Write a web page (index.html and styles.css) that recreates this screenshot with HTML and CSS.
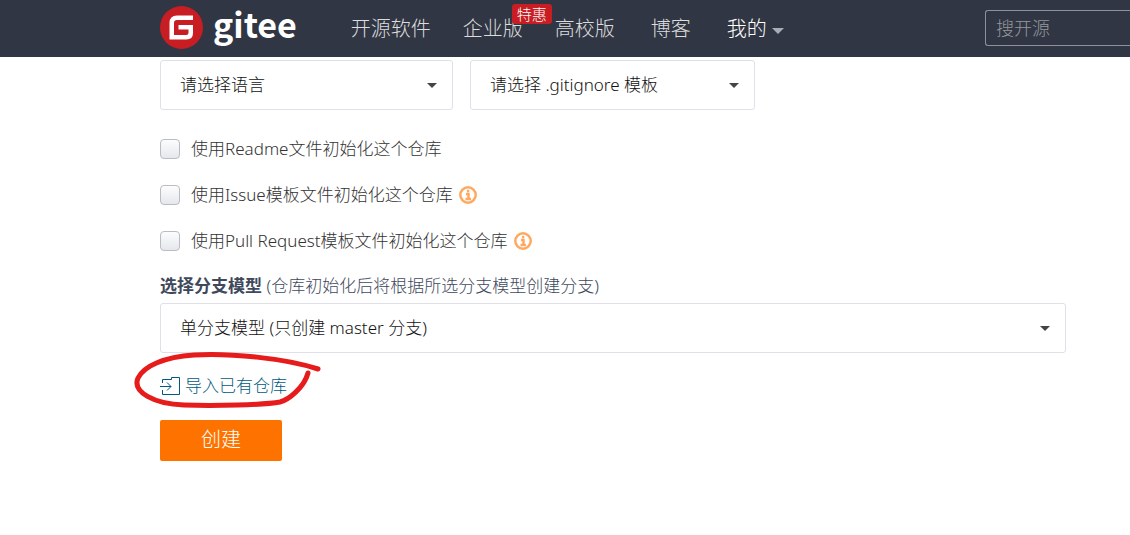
FILE: index.html
```html
<!DOCTYPE html>
<html lang="zh-CN">
  <head>
    <meta charset="UTF-8" />
    <meta name="viewport" content="width=device-width, initial-scale=1.0" />
    <title>新建仓库 - Gitee</title>
    <link rel="stylesheet" href="styles.css">
  </head>
  <body>
    <header class="header">
      <a class="logo" href="#">
        <svg class="logo-icon" viewBox="0 0 43 43" aria-hidden="true">
          <circle cx="21.5" cy="21.5" r="21.5" fill="#c71d23" />
          <path d="M33 9.500V14H17Q14 14 14 17V29H26Q28.500 29 28.500 26.500V23.500H18.500V19H33V27Q33 33.500 26.500 33.500H9.500V17Q9.500 9.500 17 9.500Z" fill="#fff" />
        </svg>
        <span class="logo-text">gitee</span>
      </a>
      <nav class="nav">
        <div class="nav-group">
          <a href="#">开源软件</a>
          <a class="enterprise" href="#">企业版<span class="badge">特惠</span></a>
          <a href="#">高校版</a>
        </div>
        <div class="nav-group nav-group-wide">
          <a href="#">博客</a>
          <a class="mine" href="#">我的</a>
        </div>
      </nav>
      <input class="search" type="text" placeholder="搜开源" aria-label="搜开源" />
    </header>

    <main>
      <form class="form">
        <div class="templates">
          <div class="dropdown language">
            <select aria-label="语言">
              <option>请选择语言</option>
            </select>
          </div>
          <div class="dropdown ignore">
            <select aria-label=".gitignore 模板">
              <option>请选择 .gitignore 模板</option>
            </select>
          </div>
        </div>

        <div class="checks">
          <div class="check">
            <input type="checkbox" id="readme" />
            <label for="readme">使用Readme文件初始化这个仓库</label>
          </div>
          <div class="check">
            <input type="checkbox" id="issue" />
            <label for="issue">使用Issue模板文件初始化这个仓库</label>
            <svg class="info" viewBox="0 0 18 18" aria-hidden="true">
              <circle cx="9" cy="9" r="7.700" />
              <path d="M7 8H9.500V13M6.500 13H12M8 5H10.300" />
            </svg>
          </div>
          <div class="check">
            <input type="checkbox" id="pull-request" />
            <label for="pull-request">使用Pull Request模板文件初始化这个仓库</label>
            <svg class="info" viewBox="0 0 18 18" aria-hidden="true">
              <circle cx="9" cy="9" r="7.700" />
              <path d="M7 8H9.500V13M6.500 13H12M8 5H10.300" />
            </svg>
          </div>
        </div>

        <label class="branch-label" for="branch"><strong>选择分支模型</strong> (仓库初始化后将根据所选分支模型创建分支)</label>
        <div class="dropdown">
          <select id="branch">
            <option>单分支模型 (只创建 master 分支)</option>
          </select>
        </div>

        <div class="import">
          <a href="#">
            <svg class="import-icon" viewBox="0 0 21 20" aria-hidden="true">
              <path d="M2.500 7V3.500H11.500V1.500H19.500V18.500H2.500V14M0 10.500H11M7 6.500L11 10.500L7 14.500" />
            </svg>
            导入已有仓库
          </a>
          <!-- hand-drawn mark around the import link -->
          <svg class="mark" viewBox="0 0 190 56" aria-hidden="true">
            <path d="M184 17C150 6 96 1 60 3C30 5 10 14 4 26C-2 40 20 52 50 53C80 54 130 53 146 50C154 48 170 36 174 21" />
          </svg>
        </div>

        <button class="submit" type="button">创建</button>
      </form>
    </main>
  </body>
</html>
```
FILE: styles.css
```css
* {
  box-sizing: border-box;
}

body {
  margin: 0;
  background-color: #fff;
  color: #40485b;
  font: 300 17px/24px "Noto Sans", "Noto Sans CJK SC", sans-serif;
}

a {
  text-decoration: none;
}

input,
select,
button {
  font: inherit;
}

/* header */
.header {
  display: flex;
  align-items: center;
  height: 57px;
  padding-left: 160px;
  background-color: #303643;
}

.logo {
  display: flex;
  align-items: center;
  gap: 10px;
  height: 54px;
  margin-bottom: 3px;
  color: #fff;
}

.logo-icon {
  width: 43px;
  height: 43px;
}

.logo-text {
  font: 700 34px/44px "Noto Sans CJK SC", sans-serif;
  padding-bottom: 6px;
}

.nav {
  display: flex;
  gap: 36px;
  margin-left: 54px;
  font-size: 20px;
  white-space: nowrap;
}

.nav a {
  color: #dcdcdc;
}

.nav-group {
  display: flex;
  gap: 32px;
}

.nav-group-wide {
  gap: 36px;
}

.enterprise {
  position: relative;
}

.badge {
  position: absolute;
  top: -13px;
  right: -29px;
  padding: 0 5px;
  border-radius: 3px;
  background-color: #c71d23;
  color: #fff;
  font-size: 15px;
  line-height: 20px;
}

.nav .mine {
  display: flex;
  align-items: center;
  gap: 5px;
  color: #fff;
}

.mine::after {
  content: "";
  margin-top: 4px;
  border: 6px solid transparent;
  border-top-color: #a9adb5;
  border-bottom: 0;
}

.search {
  width: 145px;
  height: 36px;
  margin: 0 0 2px auto;
  padding: 0 10px;
  border: 1px solid #8c919b;
  border-right: 0;
  border-radius: 3px 0 0 3px;
  background-color: transparent;
  color: #fff;
  font-size: 18px;
}

.search::placeholder {
  color: #95979b;
}

/* form */
.form {
  margin: 3px 64px 40px 160px;
}

.templates {
  display: flex;
  gap: 17px;
}

.language {
  width: 293px;
}

.ignore {
  width: 285px;
}

.dropdown {
  display: flex;
  position: relative;
}

.dropdown::after {
  content: "";
  position: absolute;
  top: 23px;
  right: 16px;
  border: 5px solid transparent;
  border-top-color: #444;
  border-bottom: 0;
  pointer-events: none;
}

.dropdown select {
  appearance: none;
  width: 100%;
  height: 50px;
  padding: 0 36px 0 19px;
  border: 1px solid #dfe0e8;
  border-radius: 3px;
  background-color: #fff;
  color: #111;
}

.checks {
  margin-top: 16px;
}

.check {
  display: flex;
  align-items: center;
  height: 46px;
  color: #333;
}

.check input {
  appearance: none;
  width: 20px;
  height: 20px;
  margin: 0 11px 0 0;
  border: 1px solid #b9bcc4;
  border-radius: 4px;
  background-image: linear-gradient(#fdfdfe, #e5e7ec);
}

.check input:checked {
  background-image: linear-gradient(#ffa44d, #fe7300);
}

.info {
  width: 18px;
  height: 18px;
  margin-left: 6px;
  fill: none;
  stroke: #ffa960;
  stroke-width: 2.5;
}

.branch-label {
  display: block;
  margin: 10px 0 5px;
}

.branch-label strong {
  font-weight: 700;
}

.import {
  position: relative;
  margin: 21px 0 18px;
}

.import a {
  display: inline-flex;
  align-items: center;
  gap: 4px;
  color: #005980;
}

.import-icon {
  width: 21px;
  height: 20px;
  fill: none;
  stroke: #005980;
}

.mark {
  position: absolute;
  top: -22px;
  left: -26px;
  width: 190px;
  height: 56px;
  overflow: visible;
  fill: none;
  stroke: #e61b1b;
  stroke-width: 5;
  stroke-linecap: round;
  stroke-linejoin: round;
  pointer-events: none;
}

.submit {
  display: block;
  padding: 8px 41px 9px;
  border: 0;
  border-radius: 2px;
  background-color: #fe7300;
  color: #fff;
  font-size: 20px;
}
```
